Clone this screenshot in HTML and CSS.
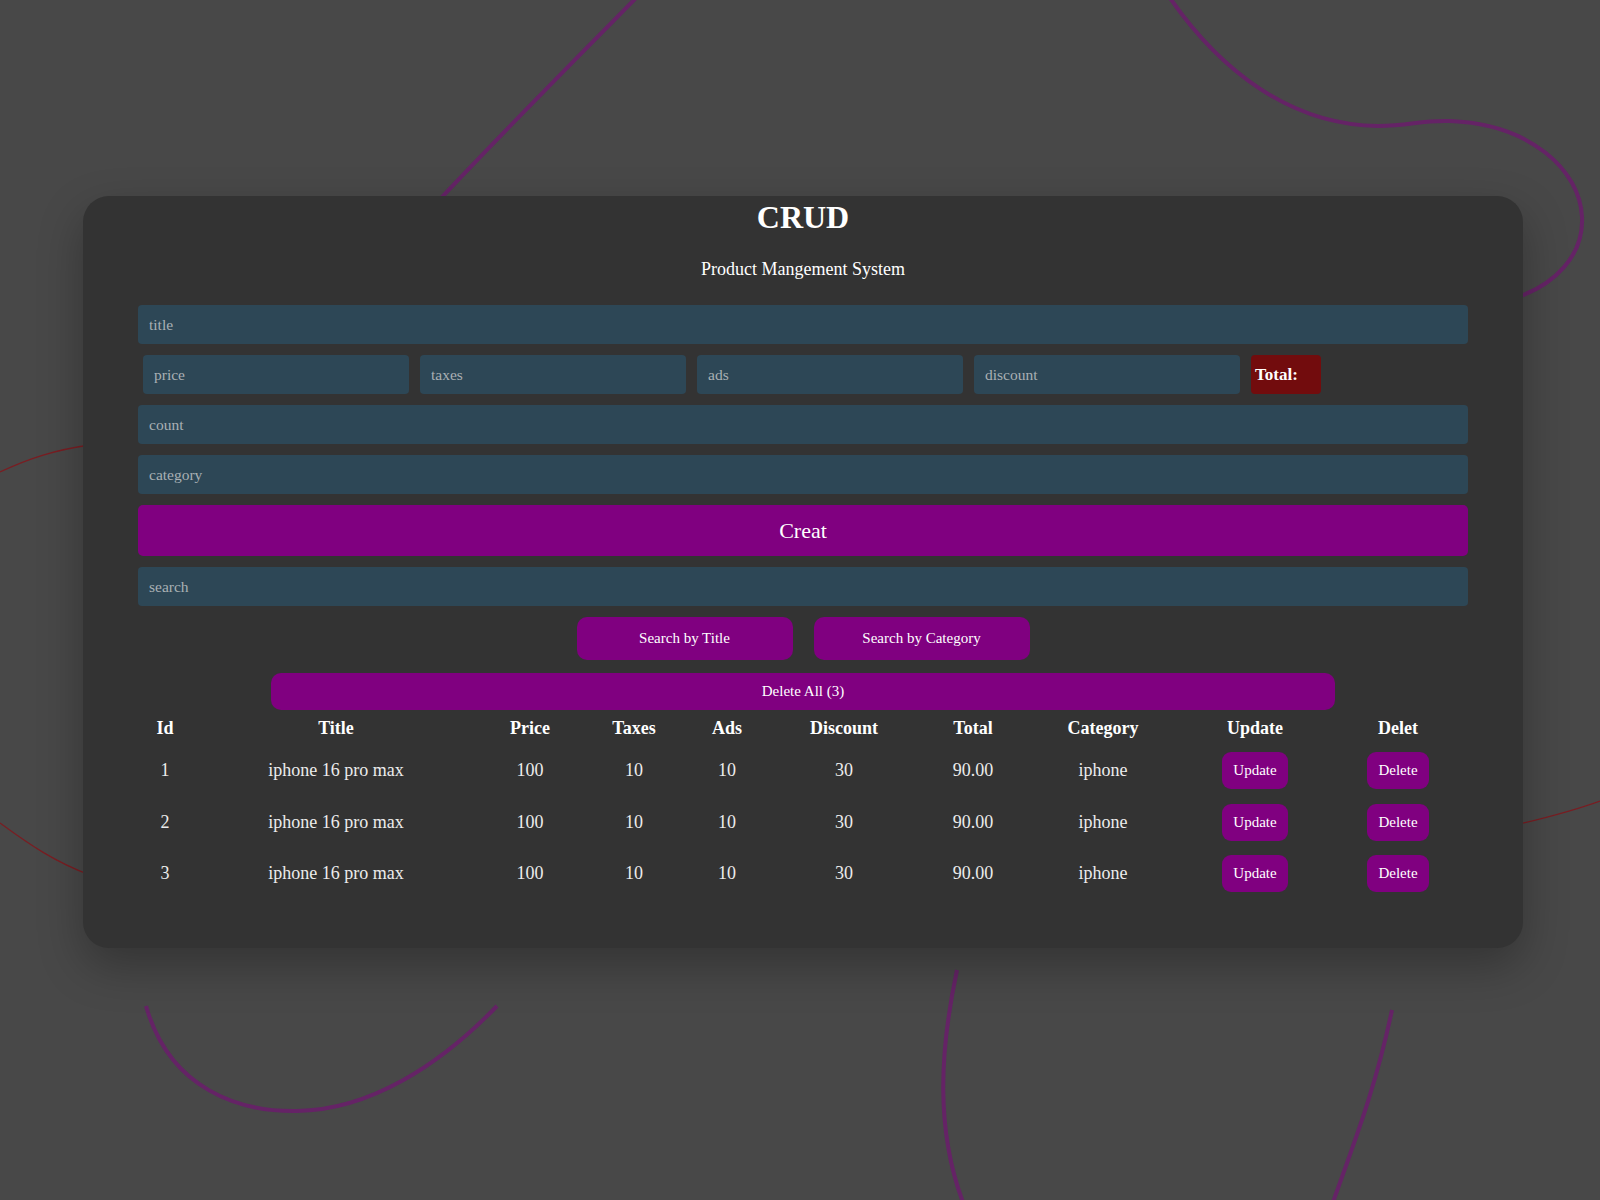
FILE: index.html
```html
<!DOCTYPE html>
<html lang="en">
<head>
<meta charset="utf-8">
<title>CRUD</title>
<link rel="stylesheet" href="styles.css">
</head>
<body>
<svg class="bg-lines" width="1600" height="1200" viewBox="0 0 1600 1200" xmlns="http://www.w3.org/2000/svg">
  <g fill="none" stroke="#652366" stroke-width="4" stroke-linecap="butt">
    <path d="M 636 -2 C 560 75 490 145 430 210"/>
    <path d="M 1170 -2 C 1220 70 1290 125 1378 126 C 1410 126 1420 120 1450 121 C 1530 124 1580 170 1582 217 C 1584 255 1555 285 1515 298"/>
    <path d="M 146 1006 C 170 1090 240 1112 297 1111 C 370 1110 440 1065 497 1006"/>
    <path d="M 957 970 C 940 1050 935 1130 964 1205"/>
    <path d="M 1392 1010 C 1375 1090 1355 1140 1332 1205"/>
  </g>
  <g fill="none" stroke="#7a1d22" stroke-width="1.3">
    <path d="M 0 472 C 30 458 55 450 90 445"/>
    <path d="M 0 823 C 30 845 55 862 90 875"/>
    <path d="M 1515 825 C 1545 818 1575 810 1600 801"/>
  </g>
</svg>

<main class="card">
  <header class="head">
    <h1 class="title">CRUD</h1>
    <p class="subtitle">Product Mangement System</p>
  </header>

  <section class="form">
    <input class="field" type="text" placeholder="title">
    <div class="price-row">
      <input class="field small" type="text" placeholder="price">
      <input class="field small" type="text" placeholder="taxes">
      <input class="field small" type="text" placeholder="ads">
      <input class="field small" type="text" placeholder="discount">
      <small class="total">Total:</small>
    </div>
    <input class="field" type="text" placeholder="count">
    <input class="field" type="text" placeholder="category">
    <button class="create">Creat</button>
    <input class="field" type="text" placeholder="search">
    <div class="search-btns">
      <button class="btn-search">Search by Title</button>
      <button class="btn-search">Search by Category</button>
    </div>
    <div class="delete-all-wrap">
      <button class="delete-all">Delete All (3)</button>
    </div>
  </section>

  <table class="table">
    <colgroup>
      <col class="c-id"><col class="c-title"><col class="c-price"><col class="c-taxes"><col class="c-ads">
      <col class="c-discount"><col class="c-total"><col class="c-category"><col class="c-update"><col class="c-delete">
    </colgroup>
    <thead>
      <tr>
        <th>Id</th><th>Title</th><th>Price</th><th>Taxes</th><th>Ads</th><th>Discount</th><th>Total</th><th>Category</th><th>Update</th><th>Delet</th>
      </tr>
    </thead>
    <tbody>
      <tr>
        <td>1</td><td>iphone 16 pro max</td><td>100</td><td>10</td><td>10</td><td>30</td><td>90.00</td><td>iphone</td>
        <td><button class="row-btn">Update</button></td><td><button class="row-btn">Delete</button></td>
      </tr>
      <tr>
        <td>2</td><td>iphone 16 pro max</td><td>100</td><td>10</td><td>10</td><td>30</td><td>90.00</td><td>iphone</td>
        <td><button class="row-btn">Update</button></td><td><button class="row-btn">Delete</button></td>
      </tr>
      <tr>
        <td>3</td><td>iphone 16 pro max</td><td>100</td><td>10</td><td>10</td><td>30</td><td>90.00</td><td>iphone</td>
        <td><button class="row-btn">Update</button></td><td><button class="row-btn">Delete</button></td>
      </tr>
    </tbody>
  </table>
</main>
</body>
</html>
```

FILE: styles.css
```css
* { box-sizing: border-box; }

html, body {
  margin: 0;
  padding: 0;
}

body {
  width: 1600px;
  height: 1200px;
  background: #484848;
  font-family: "Liberation Serif", "Times New Roman", serif;
  color: #fff;
  position: relative;
  overflow: hidden;
  padding-top: 196px;
}

.bg-lines {
  position: absolute;
  left: 0;
  top: 0;
  z-index: 0;
}

.card {
  position: relative;
  z-index: 1;
  margin-left: 83px;
  width: 1440px;
  height: 752px;
  background: #333333;
  border-radius: 26px;
  padding: 3px 55px 0;
  box-shadow: 0 18px 45px rgba(0, 0, 0, 0.28);
}

.head {
  text-align: center;
}

.title {
  margin: 0;
  font-size: 32px;
  font-weight: bold;
  line-height: 37px;
}

.subtitle {
  margin: 23px 0 25px;
  font-size: 18px;
  line-height: 21px;
}

.form {
  display: flex;
  flex-direction: column;
  gap: 11px;
}

.field {
  display: block;
  width: 100%;
  height: 39px;
  border: none;
  outline: none;
  border-radius: 4px;
  background: #2d4756;
  color: #e0e0e0;
  padding: 0 11px;
  font-family: "Liberation Serif", "Times New Roman", serif;
  font-size: 15.5px;
}

.field::placeholder {
  color: #a9b0b4;
}

.price-row {
  display: flex;
  align-items: center;
  gap: 11px;
  padding-left: 5px;
}

.field.small {
  width: 266px;
  flex: none;
}

.total {
  display: flex;
  align-items: center;
  width: 70px;
  height: 39px;
  padding-left: 4px;
  border-radius: 4px;
  background: #720c0d;
  color: #fff;
  font-size: 17px;
  font-weight: bold;
}

.create {
  height: 51px;
  border: none;
  border-radius: 5px;
  background: #800080;
  color: #fff;
  font-family: "Liberation Serif", "Times New Roman", serif;
  font-size: 22px;
  cursor: pointer;
}

.search-btns {
  display: flex;
  justify-content: center;
  gap: 21px;
}

.btn-search {
  width: 216px;
  height: 43px;
  border: none;
  border-radius: 10px;
  background: #800080;
  color: #fff;
  font-family: "Liberation Serif", "Times New Roman", serif;
  font-size: 15px;
  cursor: pointer;
}

.delete-all-wrap {
  display: flex;
  justify-content: center;
  margin-top: 2px;
}

.delete-all {
  width: 1064px;
  height: 37px;
  border: none;
  border-radius: 10px;
  background: #800080;
  color: #fff;
  font-family: "Liberation Serif", "Times New Roman", serif;
  font-size: 15px;
  cursor: pointer;
}

.table {
  width: 1330px;
  margin-top: 2px;
  border-collapse: collapse;
  table-layout: fixed;
  text-align: center;
  font-size: 18px;
}

.c-id { width: 54px; }
.c-title { width: 288px; }
.c-price { width: 100px; }
.c-taxes { width: 108px; }
.c-ads { width: 78px; }
.c-discount { width: 156px; }
.c-total { width: 102px; }
.c-category { width: 158px; }
.c-update { width: 146px; }
.c-delete { width: 140px; }

.table th {
  padding: 6px 0;
  line-height: 21px;
  font-weight: bold;
  color: #fff;
}

.table td {
  height: 51.5px;
  padding: 0;
  line-height: 21px;
  color: #ececec;
  vertical-align: middle;
}

.row-btn {
  height: 37px;
  padding: 0 11px;
  border: none;
  border-radius: 9px;
  background: #800080;
  color: #fff;
  font-family: "Liberation Serif", "Times New Roman", serif;
  font-size: 15px;
  cursor: pointer;
  vertical-align: middle;
}
```
